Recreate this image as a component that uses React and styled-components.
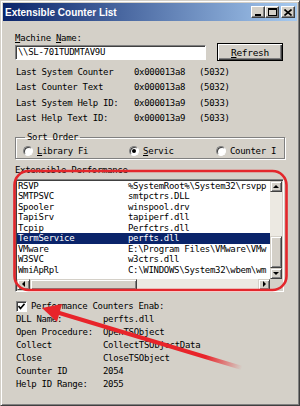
import React from 'react';
import styled, { createGlobalStyle } from 'styled-components';

const Global = createGlobalStyle`
	html, body {
		margin: 0;
		padding: 0;
		background: #d4d0c8;
	}
	* {
		box-sizing: border-box;
	}
`;

const FACE = '#d4d0c8';
const MONO = `'DejaVu Sans Mono', 'Liberation Mono', monospace`;

const Window = styled.div`
	position: relative;
	width: 300px;
	height: 406px;
	padding: 2px;
	background: ${FACE};
	border: 1px solid;
	border-color: ${FACE} #404040 #404040 ${FACE};
	box-shadow: inset 1px 1px #fff, inset -1px -1px #808080;
	font-family: ${MONO};
	font-size: 9px;
	letter-spacing: -0.3px;
	color: #000;
	overflow: hidden;
`;

const TitleBar = styled.div`
	height: 18px;
	display: flex;
	align-items: center;
	justify-content: space-between;
	padding: 0 2px 0 2px;
	background: linear-gradient(to right, #0a246a, #a6caf0);
`;

const Title = styled.span`
	font-family: 'Liberation Sans', Arial, sans-serif;
	font-weight: 700;
	font-size: 10px;
	letter-spacing: 0;
	color: #fff;
`;

const Caps = styled.div`
	display: flex;
`;

const CapButton = styled.div`
	width: 14px;
	height: 12px;
	margin-left: ${(p) => (p.$gap ? '2px' : '0')};
	display: flex;
	align-items: center;
	justify-content: center;
	background: ${FACE};
	border: 1px solid;
	border-color: #fff #404040 #404040 #fff;
	box-shadow: inset -1px -1px #808080;
`;

const Body = styled.div`
	padding: 0 13px 0 12px;
	display: flex;
	flex-direction: column;
`;

const Label = styled.div`
	height: 12px;
	line-height: 12px;
	margin-top: ${(p) => p.$mt || 0}px;
	white-space: nowrap;
`;

const Key = styled.span`
	text-decoration: underline;
`;

const MachineRow = styled.div`
	display: flex;
	align-items: center;
	justify-content: space-between;
	height: 18px;
	margin-top: -1px;
`;

const TextBox = styled.div`
	width: 191px;
	height: 15px;
	line-height: 12px;
	padding-left: 2px;
	background: #fff;
	border: 1px solid;
	border-color: #808080 #fff #fff #808080;
	box-shadow: inset 1px 1px #404040;
	white-space: nowrap;
`;

const PushButton = styled.div`
	width: 66px;
	height: 18px;
	margin-right: 1px;
	display: flex;
	align-items: center;
	justify-content: center;
	background: ${FACE};
	border: 1px solid #000;
	box-shadow: inset 1px 1px #fff, inset -1px -1px #404040, inset -2px -2px #808080;
	font-size: 9.5px;
`;

const InfoGrid = styled.div`
	display: grid;
	grid-template-columns: 118px 65px auto;
	margin-top: 4px;
	line-height: 15.4px;
	padding-left: 1px;
	white-space: nowrap;
`;

const GroupBox = styled.fieldset`
	margin: 5px 0 0 0;
	padding: 2px 6px 1px 6px;
	width: 270px;
	border: 1px solid #808080;
	box-shadow: inset 1px 1px #fff, 1px 1px #fff;
	min-width: 0;
`;

const Legend = styled.legend`
	padding: 0 2px;
	margin-left: 3px;
	line-height: 11px;
	font-size: 9px;
`;

const RadioRow = styled.div`
	display: grid;
	grid-template-columns: 106px 87px auto;
	height: 12px;
	align-items: center;
	padding-left: 1px;
`;

const RadioItem = styled.div`
	display: flex;
	align-items: center;
	gap: 4px;
	white-space: nowrap;
`;

const RadioDot = styled.span`
	width: 10px;
	height: 10px;
	border-radius: 50%;
	background: #fff;
	border: 1px solid;
	border-color: #808080 #fff #fff #808080;
	box-shadow: inset 1px 1px #404040;
	display: flex;
	align-items: center;
	justify-content: center;
	&::after {
		content: '';
		width: 4px;
		height: 4px;
		border-radius: 50%;
		background: ${(p) => (p.$on ? '#000' : 'transparent')};
	}
`;

const ListBox = styled.div`
	margin-top: 3px;
	width: 269px;
	height: 113px;
	display: grid;
	grid-template-columns: 1fr 12px;
	grid-template-rows: 1fr 11px;
	background: #fff;
	border: 1px solid;
	border-color: #808080 #fff #fff #808080;
	box-shadow: inset 1px 1px #404040, inset -1px -1px ${FACE};
	padding: 1px;
`;

const Rows = styled.div`
	overflow: hidden;
`;

const Row = styled.div`
	display: grid;
	grid-template-columns: 110px auto;
	height: 10.5px;
	line-height: 10.5px;
	padding-left: 1px;
	white-space: nowrap;
	overflow: hidden;
	background: ${(p) => (p.$sel ? '#0a246a' : 'transparent')};
	color: ${(p) => (p.$sel ? '#fff' : '#000')};
`;

const VScroll = styled.div`
	display: flex;
	flex-direction: column;
	background: #ece9e2;
`;

const HScroll = styled.div`
	display: flex;
	background: #ece9e2;
`;

const Arrow = styled.div`
	flex: none;
	width: ${(p) => p.$w}px;
	height: ${(p) => p.$h}px;
	display: flex;
	align-items: center;
	justify-content: center;
	background: ${FACE};
	border: 1px solid;
	border-color: ${FACE} #404040 #404040 ${FACE};
	box-shadow: inset 1px 1px #fff, inset -1px -1px #808080;
`;

const Track = styled.div`
	flex: 1;
	display: flex;
	flex-direction: ${(p) => (p.$v ? 'column' : 'row')};
`;

const Thumb = styled.div`
	flex: none;
	${(p) => (p.$v ? `height: ${p.$size}px; margin-top: ${p.$off}px;` : `width: ${p.$size}px; margin-left: ${p.$off}px;`)}
	background: ${FACE};
	border: 1px solid;
	border-color: ${FACE} #404040 #404040 ${FACE};
	box-shadow: inset 1px 1px #fff, inset -1px -1px #808080;
`;

const Corner = styled.div`
	background: ${FACE};
`;

const CheckRow = styled.div`
	display: flex;
	align-items: center;
	gap: 4px;
	height: 13px;
	margin-top: 8px;
	padding-left: 1px;
	white-space: nowrap;
`;

const CheckBox = styled.span`
	width: 11px;
	height: 11px;
	background: #fff;
	border: 1px solid;
	border-color: #808080 #fff #fff #808080;
	box-shadow: inset 1px 1px #404040;
	display: flex;
	align-items: center;
	justify-content: center;
`;

const DetailGrid = styled.div`
	display: grid;
	grid-template-columns: 87px auto;
	line-height: 13px;
	padding-left: 1px;
	white-space: nowrap;
`;

const Overlay = styled.svg`
	position: absolute;
	left: -1px;
	top: -1px;
	pointer-events: none;
`;

const info = [
	['Last System Counter', '0x000013a8', '(5032)'],
	['Last Counter Text', '0x000013a8', '(5032)'],
	['Last System Help ID:', '0x000013a9', '(5033)'],
	['Last Help Text ID:', '0x000013a9', '(5033)'],
];

const services = [
	['RSVP', '%SystemRoot%\\System32\\rsvpp'],
	['SMTPSVC', 'smtpctrs.DLL'],
	['Spooler', 'winspool.drv'],
	['TapiSrv', 'tapiperf.dll'],
	['Tcpip', 'Perfctrs.dll'],
	['TermService', 'perfts.dll'],
	['VMware', 'E:\\Program Files\\VMware\\VMw'],
	['W3SVC', 'w3ctrs.dll'],
	['WmiApRpl', 'C:\\WINDOWS\\System32\\wbem\\wm'],
];

const details = [
	['DLL Name:', 'perfts.dll'],
	['Open Procedure:', 'OpenTSObject'],
	['Collect', 'CollectTSObjectData'],
	['Close', 'CloseTSObject'],
	['Counter ID', '2054'],
	['Help ID Range:', '2055'],
];

const Tri = ({ dir }) => {
	const pts = {
		up: '0,3 3,0 6,3',
		down: '0,0 6,0 3,3',
		left: '3,0 3,6 0,3',
		right: '0,0 0,6 3,3',
	}[dir];
	const vert = dir === 'up' || dir === 'down';
	return (
		<svg width={vert ? 6 : 3} height={vert ? 3 : 6} viewBox={vert ? '0 0 6 3' : '0 0 3 6'}>
			<polygon points={pts} fill="#000" />
		</svg>
	);
};

const App = () => {
	return (
		<>
			<Global />
			<Window>
				<TitleBar>
					<Title>Extensible Counter List</Title>
					<Caps>
						<CapButton>
							<svg width="8" height="7" viewBox="0 0 8 7">
								<rect x="1" y="5" width="6" height="2" fill="#000" />
							</svg>
						</CapButton>
						<CapButton>
							<svg width="9" height="8" viewBox="0 0 9 8">
								<rect x="0.5" y="0.5" width="8" height="7" fill="none" stroke="#000" />
								<rect x="0" y="0" width="9" height="2" fill="#000" />
							</svg>
						</CapButton>
						<CapButton $gap>
							<svg width="8" height="7" viewBox="0 0 8 7">
								<path d="M0.5 0.5 L7.5 6.5 M7.5 0.5 L0.5 6.5" stroke="#000" strokeWidth="1.6" />
							</svg>
						</CapButton>
					</Caps>
				</TitleBar>
				<Body>
					<Label $mt={11}>
						<Key>M</Key>achine <Key>N</Key>ame:
					</Label>
					<MachineRow>
						<TextBox>\\SL-701TUDMTAV9U</TextBox>
						<PushButton>
							<span>
								<Key>R</Key>efresh
							</span>
						</PushButton>
					</MachineRow>
					<InfoGrid>
						{info.map(([a, b, c]) => (
							<React.Fragment key={a}>
								<span>{a}</span>
								<span>{b}</span>
								<span>{c}</span>
							</React.Fragment>
						))}
					</InfoGrid>
					<GroupBox>
						<Legend>Sort Order</Legend>
						<RadioRow>
							<RadioItem>
								<RadioDot />
								<span>
									<Key>L</Key>ibrary Fi
								</span>
							</RadioItem>
							<RadioItem>
								<RadioDot $on />
								<span>
									<Key>S</Key>ervic
								</span>
							</RadioItem>
							<RadioItem>
								<RadioDot />
								<span>Counter I</span>
							</RadioItem>
						</RadioRow>
					</GroupBox>
					<Label $mt={5}>Extensible Performance</Label>
					<ListBox>
						<Rows>
							{services.map(([n, p]) => (
								<Row key={n} $sel={n === 'TermService'}>
									<span>{n}</span>
									<span>{p}</span>
								</Row>
							))}
						</Rows>
						<VScroll>
							<Arrow $w={12} $h={11}>
								<Tri dir="up" />
							</Arrow>
							<Track $v>
								<Thumb $v $size={32} $off={44} />
							</Track>
							<Arrow $w={12} $h={11}>
								<Tri dir="down" />
							</Arrow>
						</VScroll>
						<HScroll>
							<Arrow $w={13} $h={11}>
								<Tri dir="left" />
							</Arrow>
							<Track>
								<Thumb $size={107} $off={0} />
							</Track>
							<Arrow $w={12} $h={11}>
								<Tri dir="right" />
							</Arrow>
						</HScroll>
						<Corner />
					</ListBox>
					<CheckRow>
						<CheckBox>
							<svg width="7" height="7" viewBox="0 0 7 7">
								<path d="M0.5 3 L2.5 5.5 L6.5 0.8" fill="none" stroke="#000" strokeWidth="1.6" />
							</svg>
						</CheckBox>
						<span>Performance Counters Enab:</span>
					</CheckRow>
					<DetailGrid>
						{details.map(([a, b]) => (
							<React.Fragment key={a}>
								<span>{a}</span>
								<span>{b}</span>
							</React.Fragment>
						))}
					</DetailGrid>
				</Body>
				<Overlay width="300" height="406" viewBox="0 0 300 406">
					<defs>
						<linearGradient id="tail" gradientUnits="userSpaceOnUse" x1="60" y1="313" x2="242" y2="368">
							<stop offset="0" stopColor="#e8242a" />
							<stop offset="0.8" stopColor="#e8242a" />
							<stop offset="1" stopColor="#e8242a" stopOpacity="0" />
						</linearGradient>
					</defs>
					<rect x="14.5" y="171" width="272" height="119" rx="14" fill="none" stroke="#e3262b" strokeWidth="2.6" />
					<line x1="56" y1="312" x2="242" y2="368" stroke="url(#tail)" strokeWidth="4" strokeLinecap="round" />
					<polygon points="42,308 62,304 57,322" fill="#e8242a" />
				</Overlay>
			</Window>
		</>
	);
};

export default App;
